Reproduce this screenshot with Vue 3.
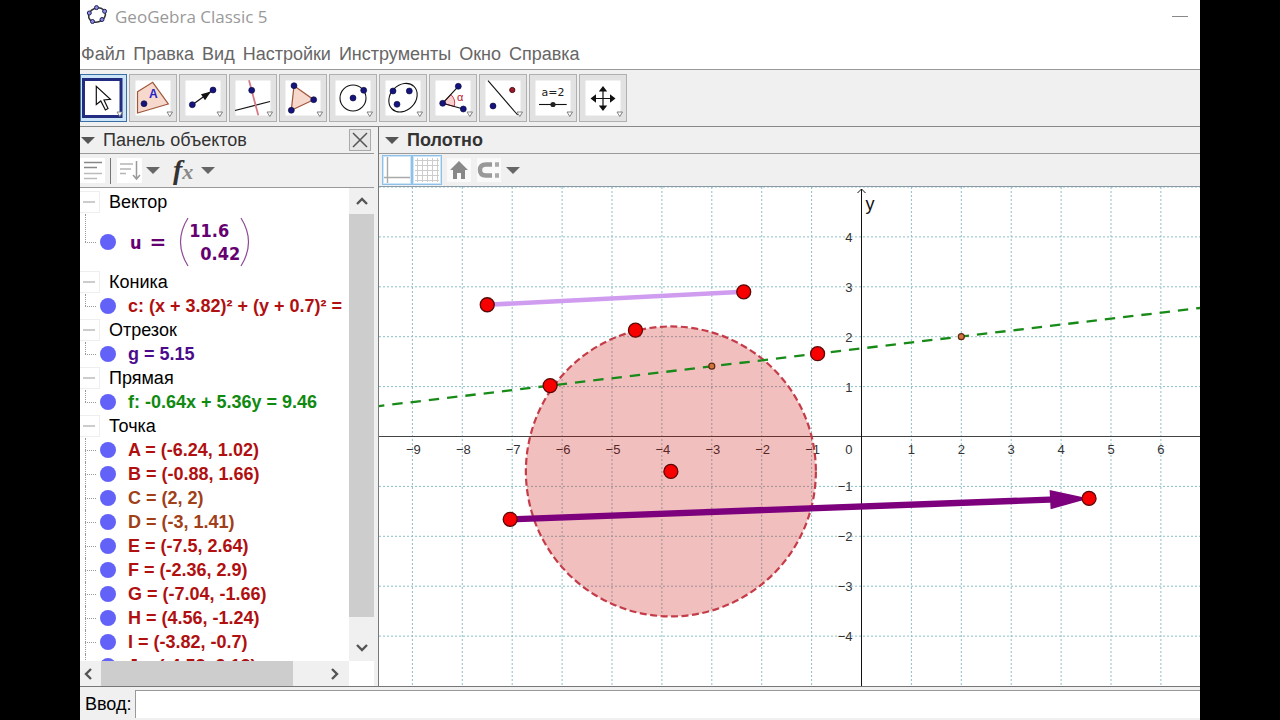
<script setup>
import { ref } from 'vue'

const menus = ['Файл', 'Правка', 'Вид', 'Настройки', 'Инструменты', 'Окно', 'Справка']

const unit = 49.9
const ox = 482.5
const oy = 249.5
const px = (x) => ox + x * unit
const py = (y) => oy - y * unit

const xs = [-9, -8, -7, -6, -5, -4, -3, -2, -1, 1, 2, 3, 4, 5, 6]
const ys = [5, 4, 3, 2, 1, -1, -2, -3, -4]
const yLabels = ys.filter((y) => y !== 5)
const num = (n) => String(n).replace('-', '−')
const lineY = (x) => (9.46 + 0.64 * x) / 5.36

const bigPoints = [
  [-6.24, 1.02], [-0.88, 1.66], [-7.5, 2.64], [-2.36, 2.9],
  [-7.04, -1.66], [4.56, -1.24], [-3.82, -0.7], [-4.53, 2.13],
]
const smallPoints = [[2, 2], [-3, 1.41]]

const groups = [
  { name: 'Вектор', items: [{ vector: ['11.6', '0.42'], color: 'violet' }] },
  { name: 'Коника', items: [{ text: 'c: (x + 3.82)² + (y + 0.7)² =', color: 'red' }] },
  { name: 'Отрезок', items: [{ text: 'g = 5.15', color: 'purple' }] },
  { name: 'Прямая', items: [{ text: 'f: -0.64x + 5.36y = 9.46', color: 'green' }] },
  {
    name: 'Точка',
    items: [
      { text: 'A = (-6.24, 1.02)', color: 'red' },
      { text: 'B = (-0.88, 1.66)', color: 'red' },
      { text: 'C = (2, 2)', color: 'brown' },
      { text: 'D = (-3, 1.41)', color: 'brown' },
      { text: 'E = (-7.5, 2.64)', color: 'red' },
      { text: 'F = (-2.36, 2.9)', color: 'red' },
      { text: 'G = (-7.04, -1.66)', color: 'red' },
      { text: 'H = (4.56, -1.24)', color: 'red' },
      { text: 'I = (-3.82, -0.7)', color: 'red' },
      { text: 'J = (-4.53, 2.13)', color: 'red' },
    ],
  },
]

const tools = [
  'Перемещать', 'Изображение', 'Вектор', 'Перпендикуляр', 'Многоугольник', 'Окружность',
  'Эллипс', 'Угол', 'Отражение', 'Ползунок', 'Переместить полотно',
]
const active = ref(0)
const command = ref('')
</script>

<template>
  <div class="stage">
    <div class="window">
      <header class="title">
        <svg class="logo" width="22" height="22" viewBox="0 0 22 22">
          <ellipse cx="11" cy="11" rx="8.6" ry="7" transform="rotate(-20 11 11)" fill="none" stroke="#333" stroke-width="1.6" />
          <g fill="#8a8ae8" stroke="#222255" stroke-width="1">
            <circle cx="10.5" cy="3.6" r="2" /><circle cx="18.6" cy="7.3" r="2" /><circle cx="16" cy="15.5" r="2" />
            <circle cx="6.5" cy="17.5" r="2" /><circle cx="3.3" cy="9" r="2" />
          </g>
        </svg>
        <h1>GeoGebra Classic 5</h1>
        <button class="minimise" aria-label="Свернуть"><span></span></button>
      </header>

      <nav class="menu">
        <button v-for="m in menus" :key="m">{{ m }}</button>
      </nav>

      <div class="tools">
        <button
          v-for="(t, i) in tools" :key="t" class="tool" :class="{ active: i === active, first: i === 0 }"
          :aria-label="t" @click="active = i"
        >
          <svg :width="i === 0 ? 47 : 48" height="48" :viewBox="i === 0 ? '1 0 47 48' : '0 0 48 48'">
            <rect v-if="i !== active" x="6.5" y="6.5" width="35" height="35" fill="#fff" />
            <rect v-else x="4.5" y="5.5" width="37.5" height="37" fill="#fff" stroke="#222c80" stroke-width="3" />
            <path v-if="i === 0" d="M17.3 12.3V30.5L21.8 27L26.4 36L29 34.6L25 26L31.4 25.4Z" fill="#fff" stroke="#111" stroke-width="1.2" />
            <g v-else-if="i === 1">
              <path d="M8.5 17.7L23.7 8.3L39.3 30L8.5 39Z" fill="#f6d8cc" stroke="#a0563a" stroke-width="1.2" />
              <circle class="pt" cx="15" cy="29.7" r="3" /><text x="20" y="23.5" class="letter">A</text>
            </g>
            <g v-else-if="i === 2">
              <path d="M13.3 30.7L34 16" stroke="#111" stroke-width="1.2" /><path d="M32 17.5L22 20.2L26 26.2Z" fill="#111" />
              <circle class="pt" cx="13.3" cy="30.7" r="3" /><circle class="pt" cx="34" cy="16" r="3" />
            </g>
            <g v-else-if="i === 3">
              <path d="M6 36.5L41 27.5" stroke="#111" stroke-width="1.2" /><path d="M20 6.3L29.3 41.3" stroke="#d87a86" stroke-width="1.8" />
              <circle class="pt" cx="22.7" cy="16.3" r="3" />
            </g>
            <g v-else-if="i === 4">
              <path d="M15 11.7L34.7 25.7L12.3 36.3Z" fill="#f6d8cc" stroke="#a0563a" stroke-width="1.2" />
              <circle class="pt" cx="15" cy="11.7" r="3" /><circle class="pt" cx="34.7" cy="25.7" r="3" /><circle class="pt" cx="12.3" cy="36.3" r="3" />
            </g>
            <g v-else-if="i === 5">
              <circle cx="24" cy="24" r="13" fill="none" stroke="#111" stroke-width="1.1" />
              <circle class="pt" cx="24" cy="24" r="3" /><circle class="pt" cx="34.7" cy="16.3" r="3" />
            </g>
            <g v-else-if="i === 6">
              <ellipse cx="24" cy="23.7" rx="15.7" ry="12.6" transform="rotate(-46 24 23.7)" fill="none" stroke="#111" stroke-width="1.1" />
              <circle class="pt" cx="14" cy="17" r="3" /><circle class="pt" cx="30.3" cy="17" r="3" /><circle class="pt" cx="18" cy="30.3" r="3" />
            </g>
            <g v-else-if="i === 7">
              <path d="M13.7 29.3L21.8 20.5A12 12 0 0 1 25.2 32.5Z" fill="#fbd0d0" stroke="#d04050" stroke-width="1" />
              <path d="M29.3 12.3L13.7 29.3L34.3 35" fill="none" stroke="#111" stroke-width="1.1" />
              <circle class="pt" cx="13.7" cy="29.3" r="3" /><circle class="pt" cx="29.3" cy="12.3" r="3" /><circle class="pt" cx="34.3" cy="35" r="3" />
              <text x="28" y="27" class="alpha">α</text>
            </g>
            <g v-else-if="i === 8">
              <path d="M9 6.7L38.7 41" stroke="#111" stroke-width="1.1" />
              <circle class="pt" cx="14" cy="32" r="3" /><circle cx="33.3" cy="16" r="2.6" fill="#a01828" stroke="#501018" />
            </g>
            <g v-else-if="i === 9">
              <text x="24" y="22" text-anchor="middle" class="slider">a=2</text>
              <path d="M10 30.5H37.7" stroke="#111" stroke-width="1.1" /><circle cx="24" cy="30.5" r="2.6" fill="#222" />
            </g>
            <g v-else>
              <path d="M24 15V34M14 24.5H34" stroke="#111" stroke-width="1.2" />
              <path d="M24 12L28.2 17.5H19.8ZM24 37L28.2 31.5H19.8ZM11.5 24.5L17 20.3V28.7ZM36.5 24.5L31 20.3V28.7Z" fill="#111" />
            </g>
            <path d="M38 38H43.5L40.8 42.5Z" fill="#fff" stroke="#777" stroke-width="0.9" />
          </svg>
        </button>
      </div>

      <main class="work">
        <aside class="side">
          <div class="head">
            <svg class="caret" width="16" height="9" viewBox="0 0 16 9"><path d="M1 1H15L8 8Z" fill="#555" /></svg>
            <h2>Панель объектов</h2>
            <button class="close" aria-label="Закрыть">
              <svg width="20" height="20" viewBox="0 0 20 20"><path d="M3 3L17 17M17 3L3 17" stroke="#555" stroke-width="1.5" /></svg>
            </button>
          </div>
          <div class="bar">
            <button aria-label="Вспомогательные объекты">
              <svg width="25" height="25" viewBox="0 0 25 25">
                <rect width="25" height="25" fill="#fff" />
                <path d="M4 4.5H22M4 9.5H17" stroke="#888" stroke-width="1.5" /><path d="M4 15.5H22M4 20.5H17" stroke="#bbb" stroke-width="1.5" />
              </svg>
            </button>
            <span class="rule"></span>
            <button class="sort" aria-label="Сортировка">
              <svg width="25" height="25" viewBox="0 0 25 25">
                <rect width="25" height="25" fill="#fff" />
                <path d="M3 6H16M3 11H14M3 15.5H9" stroke="#b5b5b5" stroke-width="1.5" /><path d="M19.5 3V20M16 17L19.5 21L23 17" fill="none" stroke="#999" stroke-width="1.5" />
              </svg>
              <svg class="caret" width="16" height="9" viewBox="0 0 16 9"><path d="M1 1H15L8 8Z" fill="#666" /></svg>
            </button>
            <button class="fx" aria-label="Стиль текста">
              <span><i class="f">f</i><i class="x">x</i></span>
              <svg class="caret" width="16" height="9" viewBox="0 0 16 9"><path d="M1 1H15L8 8Z" fill="#666" /></svg>
            </button>
          </div>
          <div class="list">
            <div class="tree">
              <section v-for="g in groups" :key="g.name">
                <div class="group"><button class="fold" aria-label="Свернуть группу"><span></span></button><h3>{{ g.name }}</h3></div>
                <ul>
                  <li v-for="(it, k) in g.items" :key="k" :class="[it.color, { tall: it.vector }]">
                    <button class="mark" aria-label="Показать объект"></button>
                    <span v-if="it.text">{{ it.text }}</span>
                    <span v-else class="vector">
                      <span>u</span><span class="eq">=</span>
                      <svg width="10" height="50" viewBox="0 0 10 50"><path d="M9 1Q-6 25 9 49" fill="none" stroke="#8d4a95" stroke-width="1.2" /></svg>
                      <span class="col"><span>{{ it.vector[0] }}</span><span class="low">{{ it.vector[1] }}</span></span>
                      <svg width="10" height="50" viewBox="0 0 10 50"><path d="M1 1Q16 25 1 49" fill="none" stroke="#8d4a95" stroke-width="1.2" /></svg>
                    </span>
                  </li>
                </ul>
              </section>
            </div>
            <div class="vscroll">
              <button aria-label="Вверх"><svg width="14" height="10" viewBox="0 0 14 10"><path d="M2 8L7 3L12 8" fill="none" stroke="#555" stroke-width="2.4" /></svg></button>
              <div class="thumb"></div>
              <button aria-label="Вниз"><svg width="14" height="10" viewBox="0 0 14 10"><path d="M2 2L7 7L12 2" fill="none" stroke="#555" stroke-width="2.4" /></svg></button>
            </div>
            <div class="hscroll">
              <button aria-label="Влево"><svg width="10" height="14" viewBox="0 0 10 14"><path d="M8 2L3 7L8 12" fill="none" stroke="#555" stroke-width="2.4" /></svg></button>
              <div class="thumb"></div>
              <button aria-label="Вправо"><svg width="10" height="14" viewBox="0 0 10 14"><path d="M2 2L7 7L2 12" fill="none" stroke="#555" stroke-width="2.4" /></svg></button>
            </div>
          </div>
        </aside>

        <section class="view">
          <div class="head">
            <svg class="caret" width="16" height="9" viewBox="0 0 16 9"><path d="M1 1H15L8 8Z" fill="#555" /></svg>
            <h2 class="strong">Полотно</h2>
          </div>
          <div class="bar">
            <button class="on" aria-label="Оси">
              <svg width="26" height="26" viewBox="0 0 26 26"><rect width="26" height="26" fill="#fff" /><path d="M3.5 0V26M0 20.5H26" stroke="#aaa" stroke-width="1.4" /></svg>
            </button>
            <button class="on" aria-label="Сетка">
              <svg width="26" height="26" viewBox="0 0 26 26"><rect width="26" height="26" fill="#fff" /><path d="M3.5 1V25M8.5 1V25M13.5 1V25M18.5 1V25M23.5 1V25M1 3.5H25M1 8.5H25M1 13.5H25M1 18.5H25M1 23.5H25" stroke="#ccc" /></svg>
            </button>
            <button class="home" aria-label="Исходный вид">
              <svg width="24" height="24" viewBox="0 0 24 24"><rect width="24" height="24" fill="#fafafa" /><path d="M12 3L21 12H18V21H14V15H10V21H6V12H3Z" fill="#888" /></svg>
            </button>
            <button class="magnet" aria-label="Привязка">
              <svg width="24" height="24" viewBox="0 0 24 24"><rect width="24" height="24" fill="#fafafa" /><path d="M15 6.5H9Q3 6.5 3 12T9 17.5H15" fill="none" stroke="#999" stroke-width="4.4" /><path d="M18 4.3H22V8.7H18ZM18 15.3H22V19.7H18Z" fill="#aaa" /></svg>
              <svg class="caret" width="16" height="9" viewBox="0 0 16 9"><path d="M1 1H15L8 8Z" fill="#666" /></svg>
            </button>
          </div>
          <div class="canvas">
            <svg width="100%" height="100%">
              <g class="grid">
                <line v-for="x in xs" :key="'x' + x" :x1="px(x)" :x2="px(x)" y1="0" y2="100%" />
                <line v-for="y in ys" :key="'y' + y" x1="0" x2="100%" :y1="py(y)" :y2="py(y)" />
              </g>
              <line x1="0" x2="100%" :y1="oy" :y2="oy" stroke="#444" />
              <line :x1="ox" :x2="ox" y1="2" y2="100%" stroke="#111" />
              <path :d="`M${ox - 4} 6L${ox} 2L${ox + 4} 6`" fill="none" stroke="#111" />
              <g class="ticks">
                <text v-for="x in xs" :key="x" :x="px(x) + (x < 0 ? 1 : 0)" :y="oy + 17" text-anchor="middle">{{ num(x) }}</text>
                <text :x="ox - 9" :y="oy + 17" text-anchor="end">0</text>
                <text v-for="y in yLabels" :key="y" :x="ox - 9" :y="py(y) + 5" text-anchor="end">{{ num(y) }}</text>
              </g>
              <text :x="ox + 4" y="23" class="axis">y</text>
              <circle :cx="px(-3.82)" :cy="py(-0.7)" r="145" fill="#cc0000" fill-opacity="0.25" stroke="#c43c48" stroke-width="2.2" stroke-dasharray="7 3.5" />
              <line :x1="-5" :y1="py(lineY(-9.77))" :x2="px(16)" :y2="py(lineY(16))" stroke="#178a17" stroke-width="2.3" stroke-dasharray="10.4 8" />
              <line :x1="px(-7.5)" :y1="py(2.64)" :x2="px(-2.36)" :y2="py(2.9)" stroke="#d09cf0" stroke-width="4.6" />
              <line :x1="px(-7.04)" :y1="py(-1.66)" :x2="px(3.9)" :y2="py(-1.26)" stroke="#7d007d" stroke-width="6.4" />
              <path :d="`M${px(4.56)} ${py(-1.24)}L${px(3.77)} ${py(-1.07)}L${px(3.79)} ${py(-1.46)}Z`" fill="#7d007d" />
              <circle v-for="(p, i) in bigPoints" :key="i" :cx="px(p[0])" :cy="py(p[1])" r="7" fill="#f80000" stroke="#5a0808" stroke-width="1.3" />
              <circle v-for="(p, i) in smallPoints" :key="'s' + i" :cx="px(p[0])" :cy="py(p[1])" r="3" fill="#d2743c" stroke="#5a2a10" stroke-width="1.2" />
            </svg>
          </div>
        </section>
      </main>

      <footer class="entry">
        <label for="command">Ввод:</label>
        <input id="command" v-model="command" type="text" />
      </footer>
    </div>
  </div>
</template>

<style>
body { margin: 0; background: #000; }
</style>

<style scoped>
* { box-sizing: border-box; }
button { border: 0; padding: 0; margin: 0; background: none; font: inherit; color: inherit; flex: none; }
h1, h2, h3, ul { margin: 0; padding: 0; font-weight: 400; font-size: 18px; list-style: none; }
svg { display: block; flex: none; }
.stage { height: 100vh; padding: 0 80px; background: #000; font-family: "Liberation Sans", Arial, sans-serif; font-size: 18px; color: #333; }
.window { display: flex; flex-direction: column; height: 100%; background: #f0f0f0; overflow: hidden; }
.title { display: flex; align-items: center; height: 34px; padding: 0 12px 2px 6px; background: #fff; }
.logo { margin-right: 7px; margin-bottom: 2px; }
.title h1 { font-family: "Open Sans", "Noto Sans", sans-serif; font-size: 17px; color: #999; }
.minimise { margin-left: auto; padding: 4px 0; }
.minimise span { display: block; width: 16px; height: 1px; background: #888; }
.menu { display: flex; align-items: center; gap: 8px; height: 35px; padding: 6px 0 0 1px; background: #fff; color: #666; }
.tools { display: flex; gap: 2px; height: 58px; padding: 4px 0; border-top: 1px solid #999; border-bottom: 1px solid #888; }
.tool { width: 48px; height: 48px; background: #e2e2e2; box-shadow: inset 0 0 0 1px #b0b0b0; }
.tool.first { width: 47px; }
.tool.active { background: #cce6f8; box-shadow: inset 0 0 0 1px #3a6ea5; }
.pt { fill: #14147a; stroke: #0a0a40; stroke-width: 0.6; }
.letter { font-size: 12px; font-weight: 700; fill: #2222cc; }
.alpha { font-size: 11px; fill: #c02030; }
.slider { font-family: "DejaVu Sans", sans-serif; font-size: 11px; fill: #222; }
.work { display: flex; flex: 1; min-height: 0; }
.side { display: flex; flex-direction: column; width: 294px; flex: none; margin-right: 4px; }
.view { display: flex; flex-direction: column; flex: 1; min-width: 0; border-left: 1px solid #777; }
.head { display: flex; align-items: center; flex: none; height: 27px; border-bottom: 1px solid #999; }
.side .head .caret { margin-right: 7px; }
.view .head .caret { margin: 0 7px 0 5px; }
.strong { font-weight: 700; }
.close { margin-left: auto; margin-right: 3px; width: 22px; height: 22px; border: 1px solid #aaa; background: #e6e6e6; }
.bar { display: flex; align-items: center; flex: none; height: 33px; border-bottom: 1px solid #8a9aa4; }
.side .bar { height: 34px; border-bottom-color: #999; }
.bar button { display: flex; align-items: center; }
.rule { width: 1px; height: 26px; margin: 0 6px 0 5px; background: #777; }
.sort .caret { margin-left: 3px; }
.fx { margin-left: 12px; }
.fx span { display: flex; align-items: baseline; height: 30px; width: 26px; line-height: 28px; font-family: "Liberation Serif", serif; font-weight: 700; }
.fx .f { font-size: 28px; color: #333; }
.fx .x { font-size: 22px; color: #888; }
.fx .caret { margin-left: 1px; }
.view .bar { padding-left: 3px; }
.on { padding: 1px; border: 1px solid #8fc0e8; background: #cce6f8; height: 30px; width: 30px; }
.home { margin-left: 5px; }
.magnet { margin-left: 6px; }
.magnet .caret { margin-left: 4px; }
.list { display: grid; grid-template-columns: 1fr 25px; grid-template-rows: 1fr 25px; flex: 1; min-height: 0; background: #fff; }
.tree { min-width: 0; min-height: 0; overflow: hidden; padding-top: 2px; color: #000; white-space: nowrap; }
.group { display: flex; align-items: center; height: 24px; }
.fold { width: 20px; height: 22px; margin-right: 9px; border: 1px solid #eee; border-left: 0; background: #fff; }
.fold span { display: block; width: 12px; height: 2px; margin-left: 3px; background: #ccc; }
li { position: relative; display: flex; align-items: center; height: 24px; padding-left: 20px; font-weight: 700; }
li::before { content: ""; position: absolute; left: 5px; top: 0; bottom: 0; border-left: 1px dotted #999; }
li::after { content: ""; position: absolute; left: 5px; top: 50%; width: 11px; border-top: 1px dotted #999; }
li:last-child::before { bottom: 50%; }
li.tall { height: 56px; }
.mark { width: 16px; height: 16px; margin-right: 12px; border-radius: 50%; background: #6262f8; }
.red { color: #b01010; }
.brown { color: #a04018; }
.green { color: #108a10; }
.purple { color: #4b0c8c; }
.violet { color: #640070; }
.vector { display: flex; align-items: center; font-family: "DejaVu Sans Condensed", "DejaVu Sans", sans-serif; padding-left: 2px; }
.eq { margin: 0 13px 0 8px; font-family: "DejaVu Sans", sans-serif; font-size: 20px; }
.col { display: flex; flex-direction: column; line-height: 23px; width: 51px; }
.low { text-align: right; }
.vscroll { display: flex; flex-direction: column; background: #f0f0f0; }
.vscroll button { display: grid; place-items: center; height: 26px; }
.vscroll .thumb { height: 403px; margin-bottom: auto; flex: 0 1 auto; background: #cdcdcd; }
.hscroll { display: flex; align-items: stretch; background: #f0f0f0; }
.hscroll button { display: grid; place-items: center; width: 21px; padding-right: 6px; }
.hscroll .thumb { width: 192px; margin-right: auto; background: #cdcdcd; }
.hscroll button:last-child { width: 28px; padding: 0; }
.canvas { flex: 1; min-height: 0; overflow: hidden; background: #fff; }
.grid line { stroke: #8cc0c8; stroke-dasharray: 2 2; }
.ticks { font-size: 13px; fill: #333; }
.axis { font-size: 18px; fill: #111; }
.entry { display: flex; flex: none; height: 34px; padding: 3px 0 2px 5px; border-top: 1px solid #777; background: #f0f0f0; color: #000; }
.entry label { align-self: center; margin-right: 3px; }
.entry input { flex: 1; min-width: 0; border: 1px solid #999; border-width: 1px 0 0 1px; padding: 0 6px; background: #fff; font: inherit; outline: 0; }
</style>
